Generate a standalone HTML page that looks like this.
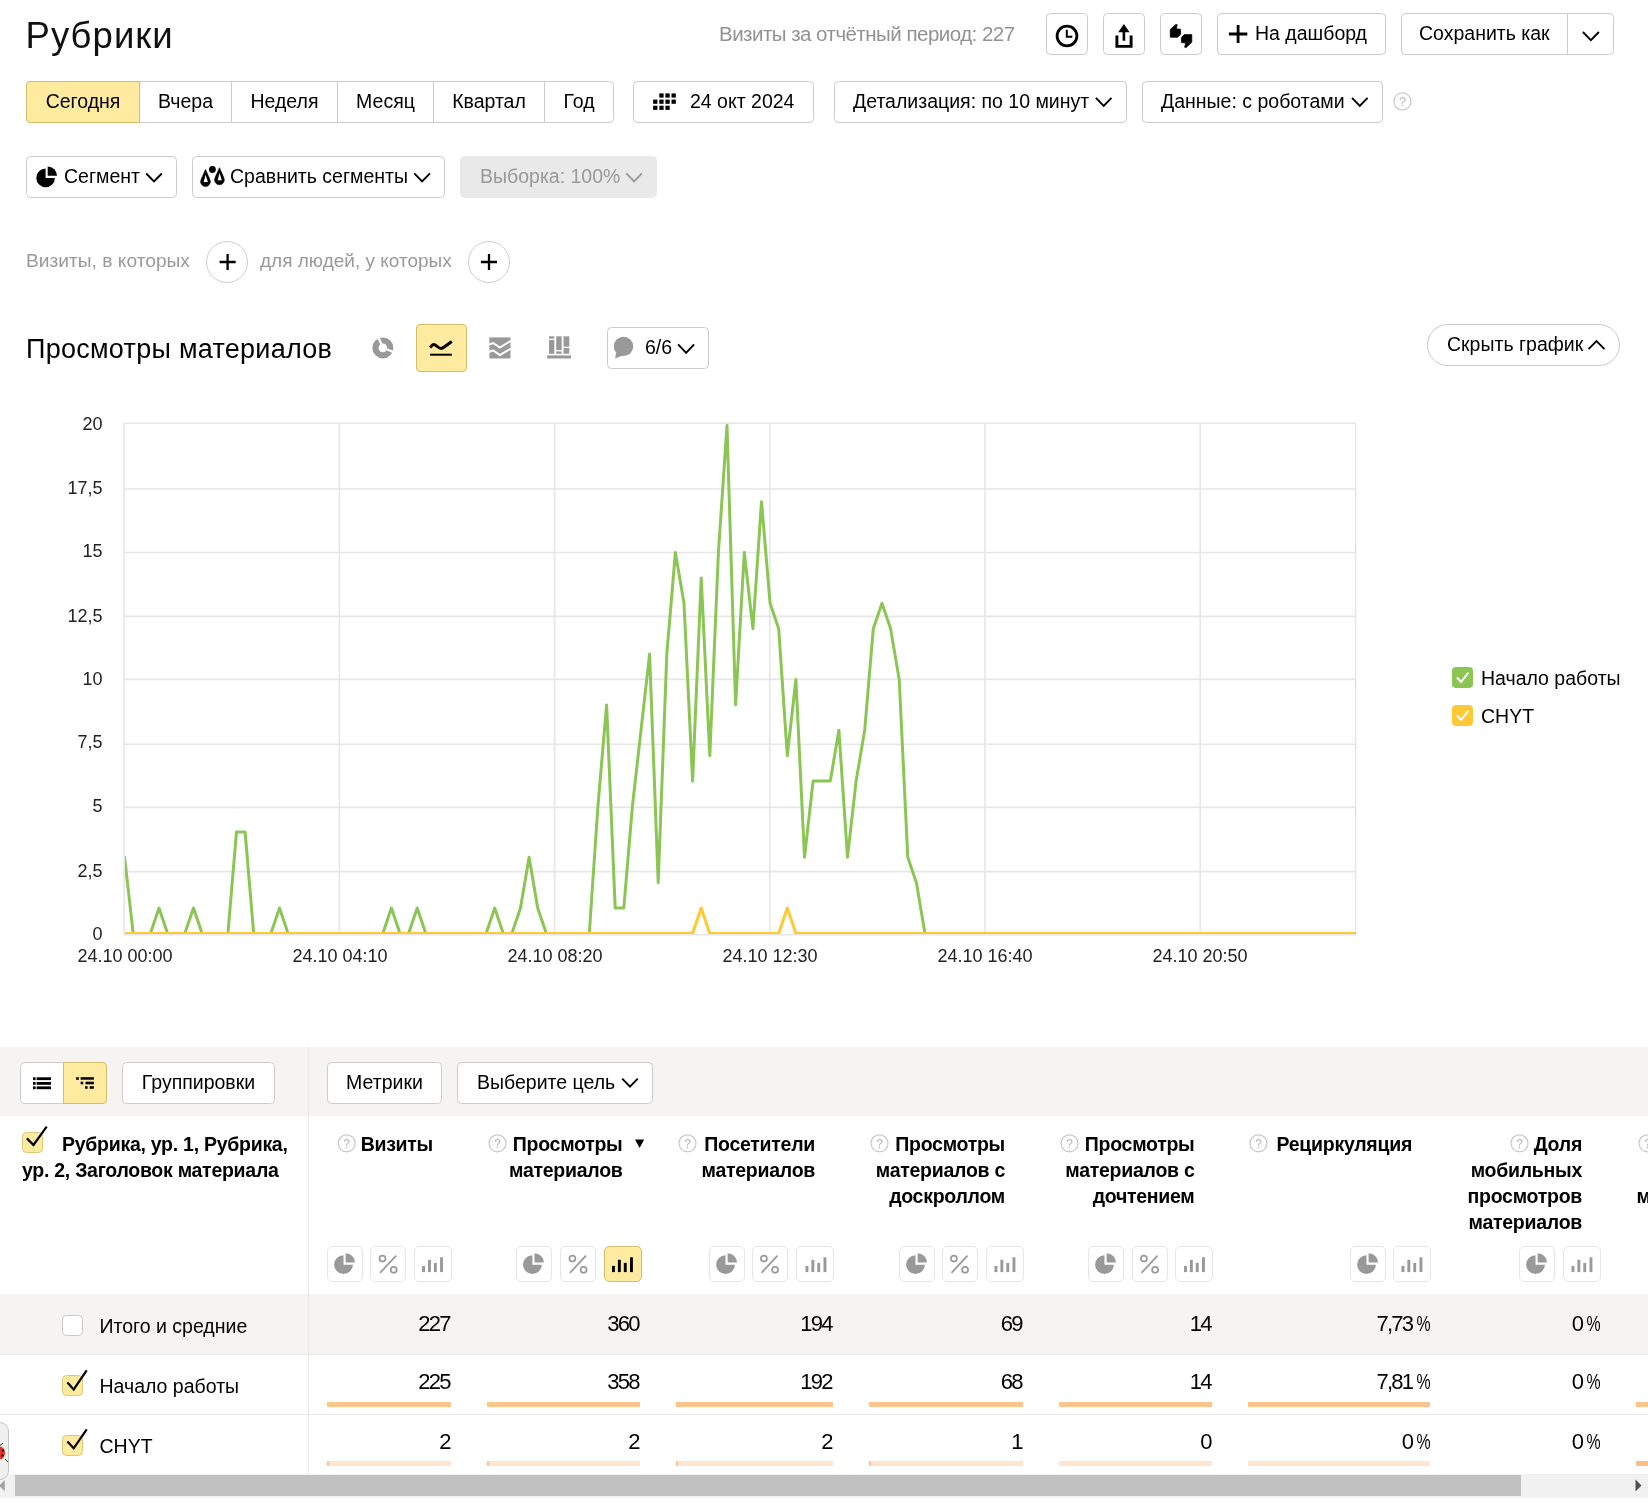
<!DOCTYPE html>
<html lang="ru"><head><meta charset="utf-8"><title>Рубрики</title>
<style>
*{box-sizing:border-box;margin:0;padding:0}
html,body{width:1648px;height:1505px;overflow:hidden;background:#fff}
body{position:relative;font-family:"Liberation Sans",sans-serif;color:#000;font-size:19.5px}
.a{position:absolute;white-space:nowrap}
.btn{position:absolute;height:42px;top:0;border:1px solid #ccc;border-radius:4.5px;background:#fff;line-height:39.5px;white-space:nowrap;text-align:center;font-size:19.5px}
.btn svg{position:absolute}
.gray{color:#999}
.chev{display:inline-block;width:15px;height:9px;vertical-align:middle;margin-left:5px;position:relative;top:-1px}

.hb{font-weight:bold;font-size:19.5px;line-height:26px;letter-spacing:-0.27px;margin-top:0.5px}
.sb{top:1246px;height:36px;border:1px solid #e6e6e6;border-radius:5px;background:#fff}
.num{font-size:22px;line-height:26px;letter-spacing:-1.75px}
.pc{display:inline-block;transform:scaleX(.72);transform-origin:100% 50%;letter-spacing:0;margin-left:-1.6px;margin-right:-1.5px}
#wrap{position:absolute;left:0;top:0;width:1648px;height:1505px;will-change:transform;overflow:hidden}
</style></head><body><div id="wrap">

<!-- ===== header ===== -->
<div class="a" id="title" style="left:25.5px;top:13.4px;font-size:36.5px;line-height:46px;letter-spacing:1.05px;color:#111">Рубрики</div>
<div class="a" id="visits" style="left:719px;top:20.5px;font-size:20.5px;line-height:26px;letter-spacing:-0.52px;color:#929292">Визиты за отчётный период: 227</div>

<div id="toprow" style="position:absolute;left:0;top:13px;width:1648px;height:42px">
 <div class="btn" style="left:1046px;width:42px"></div>
 <div class="btn" style="left:1103px;width:42px"></div>
 <div class="btn" style="left:1160px;width:42px"></div>
 <div class="btn" style="left:1217px;width:169px;text-align:left;padding-left:37px">На дашборд</div>
 <div class="btn" style="left:1401px;width:213px;text-align:left;padding-left:17px">Сохранить как</div>
 <div class="a" style="left:1567px;top:0;width:1px;height:42px;background:#ccc"></div>
</div>

<!-- ===== period row ===== -->
<div id="row1" style="position:absolute;left:0;top:81px;width:1648px;height:42px">
 <div class="btn" style="left:26px;width:588px;"></div>
 <div class="btn" style="left:26px;width:114px;background:#ffeba0;border-color:#d2bd6c;border-radius:4px 0 0 4px">Сегодня</div>
 <div class="a" style="left:139px;width:93px;top:0;line-height:41.5px;text-align:center">Вчера</div>
 <div class="a" style="left:231px;top:0;width:1px;height:42px;background:#ccc"></div>
 <div class="a" style="left:232px;width:105px;top:0;line-height:41.5px;text-align:center">Неделя</div>
 <div class="a" style="left:337px;top:0;width:1px;height:42px;background:#ccc"></div>
 <div class="a" style="left:338px;width:95px;top:0;line-height:41.5px;text-align:center">Месяц</div>
 <div class="a" style="left:433px;top:0;width:1px;height:42px;background:#ccc"></div>
 <div class="a" style="left:434px;width:110px;top:0;line-height:41.5px;text-align:center">Квартал</div>
 <div class="a" style="left:544px;top:0;width:1px;height:42px;background:#ccc"></div>
 <div class="a" style="left:545px;width:68px;top:0;line-height:41.5px;text-align:center">Год</div>

 <div class="btn" style="left:633px;width:181px;text-align:left;padding-left:56px">24 окт 2024</div>
 <div class="btn" style="left:834px;width:293px;text-align:left;padding-left:18px">Детализация: по 10 минут</div>
 <div class="btn" style="left:1142px;width:241px;text-align:left;padding-left:18px">Данные: с роботами</div>
</div>

<!-- ===== segment row ===== -->
<div id="row2" style="position:absolute;left:0;top:156px;width:1648px;height:42px">
 <div class="btn" style="left:26px;width:151px;text-align:left;padding-left:37px">Сегмент</div>
 <div class="btn" style="left:192px;width:253px;text-align:left;padding-left:37px">Сравнить сегменты</div>
 <div class="btn" style="left:460px;width:197px;text-align:left;padding-left:19px;background:#e9e9e9;border-color:#e9e9e9;color:#999">Выборка: 100%</div>
</div>

<!-- ===== filter row ===== -->
<div class="a gray" style="left:26px;top:248px;font-size:19.2px;line-height:26px">Визиты, в которых</div>
<div class="a" style="left:206px;top:241px;width:42px;height:42px;border:1px solid #ccc;border-radius:50%"></div>
<div class="a gray" style="left:260px;top:248px;font-size:19px;line-height:26px">для людей, у которых</div>
<div class="a" style="left:468px;top:241px;width:42px;height:42px;border:1px solid #ccc;border-radius:50%"></div>

<!-- ===== chart header ===== -->
<div class="a" id="ctitle" style="left:26px;top:331.5px;font-size:27px;line-height:34px;letter-spacing:0.27px">Просмотры материалов</div>
<div class="a" style="left:416px;top:324px;width:51px;height:48px;background:#ffeba0;border:1px solid #d2bd6c;border-radius:4px"></div>
<div class="btn" style="left:607px;top:327px;width:102px;text-align:left;padding-left:37px">6/6</div>
<div class="btn" style="left:1427px;top:324px;width:193px;border-radius:21px;text-align:left;padding-left:19px;border-color:#c8c8c8">Скрыть график</div>

<!-- ===== chart ===== -->
<svg class="a" style="left:0;top:400px" width="1648" height="600" viewBox="0 400 1648 600">
 <g stroke="#e6e6e6" stroke-width="1.6" fill="none">
  <path d="M123.4 423.2H1356M124 489H1356M124 552.5H1356M124 616.4H1356M124 679.4H1356M124 744.3H1356M124 807.4H1356M124 871.6H1356M123.4 934.8H1356"/>
  <path d="M124.1 423V935M339.4 423V935M554.6 423V935M769.8 423V935M985 423V935M1200.2 423V935M1355.6 423V935"/>
 </g>
 <clipPath id="cp"><rect x="125" y="420" width="1231.2" height="514.1"/></clipPath>
 <g clip-path="url(#cp)">
 <polyline points="124.6,857.3 133.2,933.5 141.8,933.5 150.4,933.5 159.0,908.1 167.6,933.5 176.2,933.5 184.8,933.5 193.5,908.1 202.1,933.5 210.7,933.5 219.3,933.5 227.9,933.5 236.5,831.9 245.1,831.9 253.7,933.5 262.3,933.5 270.9,933.5 279.5,908.1 288.1,933.5 296.7,933.5 305.3,933.5 313.9,933.5 322.5,933.5 331.2,933.5 339.8,933.5 348.4,933.5 357.0,933.5 365.6,933.5 374.2,933.5 382.8,933.5 391.4,908.1 400.0,933.5 408.6,933.5 417.2,908.1 425.8,933.5 434.4,933.5 443.0,933.5 451.6,933.5 460.2,933.5 468.9,933.5 477.5,933.5 486.1,933.5 494.7,908.1 503.3,933.5 511.9,933.5 520.5,908.1 529.1,857.3 537.7,908.1 546.3,933.5 554.9,933.5 563.5,933.5 572.1,933.5 580.7,933.5 589.3,933.5 597.9,806.5 606.6,704.9 615.2,908.1 623.8,908.1 632.4,806.5 641.0,730.3 649.6,654.1 658.2,882.7 666.8,654.1 675.4,552.5 684.0,603.3 692.6,781.1 701.2,577.9 709.8,755.7 718.4,552.5 727.0,425.5 735.6,704.9 744.3,552.5 752.9,628.7 761.5,501.7 770.1,603.3 778.7,628.7 787.3,755.7 795.9,679.5 804.5,857.3 813.1,781.1 821.7,781.1 830.3,781.1 838.9,730.3 847.5,857.3 856.1,781.1 864.7,730.3 873.3,628.7 882.0,603.3 890.6,628.7 899.2,679.5 907.8,857.3 916.4,882.7 925.0,933.5 933.6,933.5 942.2,933.5 950.8,933.5 959.4,933.5 968.0,933.5 976.6,933.5 985.2,933.5 993.8,933.5 1002.4,933.5 1011.0,933.5 1019.7,933.5 1028.3,933.5 1036.9,933.5 1045.5,933.5 1054.1,933.5 1062.7,933.5 1071.3,933.5 1079.9,933.5 1088.5,933.5 1097.1,933.5 1105.7,933.5 1114.3,933.5 1122.9,933.5 1131.5,933.5 1140.1,933.5 1148.7,933.5 1157.4,933.5 1166.0,933.5 1174.6,933.5 1183.2,933.5 1191.8,933.5 1200.4,933.5 1209.0,933.5 1217.6,933.5 1226.2,933.5 1234.8,933.5 1243.4,933.5 1252.0,933.5 1260.6,933.5 1269.2,933.5 1277.8,933.5 1286.4,933.5 1295.1,933.5 1303.7,933.5 1312.3,933.5 1320.9,933.5 1329.5,933.5 1338.1,933.5 1346.7,933.5 1355.3,933.5" fill="none" stroke="#8bc554" stroke-width="3" stroke-linejoin="round" stroke-linecap="round"/>
 <polyline points="124.6,933.5 133.2,933.5 141.8,933.5 150.4,933.5 159.0,933.5 167.6,933.5 176.2,933.5 184.8,933.5 193.5,933.5 202.1,933.5 210.7,933.5 219.3,933.5 227.9,933.5 236.5,933.5 245.1,933.5 253.7,933.5 262.3,933.5 270.9,933.5 279.5,933.5 288.1,933.5 296.7,933.5 305.3,933.5 313.9,933.5 322.5,933.5 331.2,933.5 339.8,933.5 348.4,933.5 357.0,933.5 365.6,933.5 374.2,933.5 382.8,933.5 391.4,933.5 400.0,933.5 408.6,933.5 417.2,933.5 425.8,933.5 434.4,933.5 443.0,933.5 451.6,933.5 460.2,933.5 468.9,933.5 477.5,933.5 486.1,933.5 494.7,933.5 503.3,933.5 511.9,933.5 520.5,933.5 529.1,933.5 537.7,933.5 546.3,933.5 554.9,933.5 563.5,933.5 572.1,933.5 580.7,933.5 589.3,933.5 597.9,933.5 606.6,933.5 615.2,933.5 623.8,933.5 632.4,933.5 641.0,933.5 649.6,933.5 658.2,933.5 666.8,933.5 675.4,933.5 684.0,933.5 692.6,933.5 701.2,908.1 709.8,933.5 718.4,933.5 727.0,933.5 735.6,933.5 744.3,933.5 752.9,933.5 761.5,933.5 770.1,933.5 778.7,933.5 787.3,908.1 795.9,933.5 804.5,933.5 813.1,933.5 821.7,933.5 830.3,933.5 838.9,933.5 847.5,933.5 856.1,933.5 864.7,933.5 873.3,933.5 882.0,933.5 890.6,933.5 899.2,933.5 907.8,933.5 916.4,933.5 925.0,933.5 933.6,933.5 942.2,933.5 950.8,933.5 959.4,933.5 968.0,933.5 976.6,933.5 985.2,933.5 993.8,933.5 1002.4,933.5 1011.0,933.5 1019.7,933.5 1028.3,933.5 1036.9,933.5 1045.5,933.5 1054.1,933.5 1062.7,933.5 1071.3,933.5 1079.9,933.5 1088.5,933.5 1097.1,933.5 1105.7,933.5 1114.3,933.5 1122.9,933.5 1131.5,933.5 1140.1,933.5 1148.7,933.5 1157.4,933.5 1166.0,933.5 1174.6,933.5 1183.2,933.5 1191.8,933.5 1200.4,933.5 1209.0,933.5 1217.6,933.5 1226.2,933.5 1234.8,933.5 1243.4,933.5 1252.0,933.5 1260.6,933.5 1269.2,933.5 1277.8,933.5 1286.4,933.5 1295.1,933.5 1303.7,933.5 1312.3,933.5 1320.9,933.5 1329.5,933.5 1338.1,933.5 1346.7,933.5 1355.3,933.5" fill="none" stroke="#ffc935" stroke-width="3" stroke-linejoin="round" stroke-linecap="round"/>
 </g>
 <g font-family="Liberation Sans" font-size="18" fill="#222" text-anchor="end">
  <text x="102.5" y="429.8">20</text><text x="102.5" y="494">17,5</text><text x="102.5" y="557">15</text><text x="102.5" y="622">12,5</text>
  <text x="102.5" y="684.8">10</text><text x="102.5" y="748.3">7,5</text><text x="102.5" y="811.5">5</text><text x="102.5" y="877">2,5</text><text x="102.5" y="940">0</text>
 </g>
 <g font-family="Liberation Sans" font-size="18" fill="#222" text-anchor="middle">
  <text x="125" y="962">24.10 00:00</text><text x="340" y="962">24.10 04:10</text><text x="555" y="962">24.10 08:20</text>
  <text x="770" y="962">24.10 12:30</text><text x="985" y="962">24.10 16:40</text><text x="1200" y="962">24.10 20:50</text>
 </g>
</svg>

<!-- legend -->
<div class="a" style="left:1452px;top:667px;width:21px;height:21px;border-radius:4px;background:#8bc554"></div>
<div class="a" style="left:1481px;top:666px;line-height:24px">Начало работы</div>
<div class="a" style="left:1452px;top:705px;width:21px;height:21px;border-radius:4px;background:#ffc935"></div>
<div class="a" style="left:1481px;top:704px;line-height:24px">CHYT</div>

<!-- ===== table ===== -->
<div class="a" style="left:0;top:1047px;width:1648px;height:69px;background:#f5f4f2"></div>
<div class="a" style="left:0;top:1294px;width:1648px;height:61px;background:#f5f4f2"></div>
<div class="a" style="left:0;top:1354px;width:1648px;height:1px;background:#e8e8e8"></div>
<div class="a" style="left:0;top:1414px;width:1648px;height:1px;background:#e8e8e8"></div>
<div class="a" style="left:308px;top:1047px;width:1px;height:427px;background:#e8e8e8"></div>

<div id="tbar" style="position:absolute;left:0;top:1062px;width:1648px;height:42px">
 <div class="btn" style="left:20px;width:87px"></div>
 <div class="btn" style="left:63px;width:44px;background:#ffeba0;border-color:#d2bd6c;border-radius:0 4px 4px 0"></div>
 <div class="btn" style="left:122px;width:153px">Группировки</div>
 <div class="btn" style="left:327px;width:115px">Метрики</div>
 <div class="btn" style="left:457px;width:196px;text-align:left;padding-left:19px">Выберите цель</div>
</div>

<div class="a" style="left:22px;top:1132px;width:21px;height:21px;background:#ffeba0;border:1px solid #dcc878;border-radius:4.5px"></div>
<div class="a hb" style="left:62px;top:1130px">Рубрика, ур. 1, Рубрика,</div>
<div class="a hb" style="left:22px;top:1156px">ур. 2, Заголовок материала</div>
<div class="a hb" style="right:1215px;top:1130px">Визиты</div>
<div class="a hb" style="right:1025.5px;top:1130px">Просмотры</div>
<div class="a hb" style="right:1025.5px;top:1156px">материалов</div>
<div class="a hb" style="right:833px;top:1130px">Посетители</div>
<div class="a hb" style="right:833px;top:1156px">материалов</div>
<div class="a hb" style="right:643px;top:1130px">Просмотры</div>
<div class="a hb" style="right:643px;top:1156px">материалов с</div>
<div class="a hb" style="right:643px;top:1182px">доскроллом</div>
<div class="a hb" style="right:453.5px;top:1130px">Просмотры</div>
<div class="a hb" style="right:453.5px;top:1156px">материалов с</div>
<div class="a hb" style="right:453.5px;top:1182px">дочтением</div>
<div class="a hb" style="right:236px;top:1130px">Рециркуляция</div>
<div class="a hb" style="right:66px;top:1130px">Доля</div>
<div class="a hb" style="right:66px;top:1156px">мобильных</div>
<div class="a hb" style="right:66px;top:1182px">просмотров</div>
<div class="a hb" style="right:66px;top:1208px">материалов</div>
<div class="a hb" style="left:1636.5px;top:1182px">м</div>
<div class="a sb" style="left:327px;width:36px"></div>
<div class="a sb" style="left:370px;width:36px"></div>
<div class="a sb" style="left:414px;width:38px"></div>
<div class="a sb" style="left:516px;width:36px"></div>
<div class="a sb" style="left:560px;width:36px"></div>
<div class="a sb" style="left:709px;width:36px"></div>
<div class="a sb" style="left:752px;width:36px"></div>
<div class="a sb" style="left:796px;width:38px"></div>
<div class="a sb" style="left:899px;width:36px"></div>
<div class="a sb" style="left:942px;width:36px"></div>
<div class="a sb" style="left:986px;width:38px"></div>
<div class="a sb" style="left:1088px;width:36px"></div>
<div class="a sb" style="left:1132px;width:36px"></div>
<div class="a sb" style="left:1175px;width:38px"></div>
<div class="a sb" style="left:1350px;width:36px"></div>
<div class="a sb" style="left:1393px;width:38px"></div>
<div class="a sb" style="left:1519px;width:36px"></div>
<div class="a sb" style="left:1563px;width:38px"></div>
<div class="a sb" style="left:604px;width:38px;background:#ffeba0;border-color:#d2bd6c"></div>
<div class="a" style="left:62px;top:1315px;width:21px;height:21px;background:#fff;border:1px solid #c8c8c8;border-radius:4.5px"></div>
<div class="a" style="left:62px;top:1375px;width:21px;height:21px;background:#ffeba0;border:1px solid #dcc878;border-radius:4.5px"></div>
<div class="a" style="left:62px;top:1435px;width:21px;height:21px;background:#ffeba0;border:1px solid #dcc878;border-radius:4.5px"></div>
<div class="a" style="left:99.5px;top:1313px;line-height:26px">Итого и средние</div>
<div class="a" style="left:99.5px;top:1373px;line-height:26px">Начало работы</div>
<div class="a" style="left:99.5px;top:1433px;line-height:26px">CHYT</div>
<div class="a num" style="right:1198.3px;top:1311.4px">227</div>
<div class="a num" style="right:1009.3px;top:1311.4px">360</div>
<div class="a num" style="right:816.3px;top:1311.4px">194</div>
<div class="a num" style="right:626.3px;top:1311.4px">69</div>
<div class="a num" style="right:437.3px;top:1311.4px">14</div>
<div class="a num" style="right:219.3px;top:1311.4px">7,73<span class="pc">%</span></div>
<div class="a num" style="right:49.3px;top:1311.4px">0<span class="pc">%</span></div>
<div class="a num" style="right:1198.3px;top:1369.4px">225</div>
<div class="a num" style="right:1009.3px;top:1369.4px">358</div>
<div class="a num" style="right:816.3px;top:1369.4px">192</div>
<div class="a num" style="right:626.3px;top:1369.4px">68</div>
<div class="a num" style="right:437.3px;top:1369.4px">14</div>
<div class="a num" style="right:219.3px;top:1369.4px">7,81<span class="pc">%</span></div>
<div class="a num" style="right:49.3px;top:1369.4px">0<span class="pc">%</span></div>
<div class="a num" style="right:1198.3px;top:1429.4px">2</div>
<div class="a num" style="right:1009.3px;top:1429.4px">2</div>
<div class="a num" style="right:816.3px;top:1429.4px">2</div>
<div class="a num" style="right:626.3px;top:1429.4px">1</div>
<div class="a num" style="right:437.3px;top:1429.4px">0</div>
<div class="a num" style="right:219.3px;top:1429.4px">0<span class="pc">%</span></div>
<div class="a num" style="right:49.3px;top:1429.4px">0<span class="pc">%</span></div>
<div class="a" style="left:327px;top:1402px;width:124px;height:4.5px;background:#fdc48b"></div>
<div class="a" style="left:327px;top:1461px;width:124px;height:5px;background:#fee5cd"></div>
<div class="a" style="left:487px;top:1402px;width:153px;height:4.5px;background:#fdc48b"></div>
<div class="a" style="left:487px;top:1461px;width:153px;height:5px;background:#fee5cd"></div>
<div class="a" style="left:676px;top:1402px;width:157px;height:4.5px;background:#fdc48b"></div>
<div class="a" style="left:676px;top:1461px;width:157px;height:5px;background:#fee5cd"></div>
<div class="a" style="left:869px;top:1402px;width:154px;height:4.5px;background:#fdc48b"></div>
<div class="a" style="left:869px;top:1461px;width:154px;height:5px;background:#fee5cd"></div>
<div class="a" style="left:1059px;top:1402px;width:153px;height:4.5px;background:#fdc48b"></div>
<div class="a" style="left:1059px;top:1461px;width:153px;height:5px;background:#fee5cd"></div>
<div class="a" style="left:1248px;top:1402px;width:182px;height:4.5px;background:#fdc48b"></div>
<div class="a" style="left:1248px;top:1461px;width:182px;height:5px;background:#fee5cd"></div>
<div class="a" style="left:1636px;top:1402px;width:12px;height:4.5px;background:#fdc48b"></div>
<div class="a" style="left:1636px;top:1461px;width:12px;height:5px;background:#fbc08a"></div>
<div class="a" style="left:327px;top:1461px;width:1.5px;height:5px;background:#fdc48b"></div>
<div class="a" style="left:487px;top:1461px;width:1.5px;height:5px;background:#fdc48b"></div>
<div class="a" style="left:676px;top:1461px;width:1.5px;height:5px;background:#fdc48b"></div>
<div class="a" style="left:869px;top:1461px;width:1.5px;height:5px;background:#fdc48b"></div>
<div class="a" style="left:-9px;top:1422px;width:18px;height:58px;background:#f0f0f0;border:1px solid #c4c4c4;border-radius:9px;z-index:5"></div>
<svg class="a" style="left:0;top:1442px;z-index:6" width="9" height="22" viewBox="0 0 9 22"><ellipse cx="0" cy="11" rx="5" ry="6.5" fill="#e8302a"/><circle cx="3" cy="8.5" r="1.2" fill="#222"/><circle cx="2.5" cy="13.5" r="1.2" fill="#222"/><path d="M0 3.5L3 1M5 17L8 20" stroke="#333" stroke-width="1"/></svg>
<!-- scrollbar -->
<div class="a" style="left:0;top:1474px;width:1648px;height:24px;background:#f1f1f1"></div>
<div class="a" style="left:15px;top:1475px;width:1506px;height:21px;background:#c1c1c1"></div>

<svg class="a" style="left:0;top:0;pointer-events:none" width="1648" height="1505" viewBox="0 0 1648 1505">
<circle cx="1067" cy="36" r="9.9" fill="none" stroke="#000" stroke-width="2.8"/><path d="M1066.8 29.8V36.8H1072.3" fill="none" stroke="#000" stroke-width="2"/>
<path d="M1123.9 24L1129.6 32.2H1125.2V40.8H1122.6V32.2H1118.2Z" fill="#000"/><path d="M1116.9 35.4V46.4H1131.1V35.4" fill="none" stroke="#000" stroke-width="2.9"/>
<path d="M1170.2 29.6L1175.8 24.4L1177.3 24.7L1176.3 28.8L1180.5 29.2L1180.7 34.3L1177.9 37.3H1170.3Z" fill="#000" stroke="#000" stroke-width="0.7" stroke-linejoin="round"/>
<path d="M1191.8 42.2L1186.2 47.6L1184.6 47.2L1185.7 43.1L1181.4 42.6L1181.4 37.6L1184.1 34.6H1191.8Z" fill="#000" stroke="#000" stroke-width="0.7" stroke-linejoin="round"/>
<path d="M1228.9 34H1247.3M1238.1 25V43" stroke="#000" stroke-width="2.8"/>
<path d="M1582.9 32.0L1590.9 40.2L1598.9 32.0" stroke="#000" stroke-width="1.9" fill="none"/>
<rect x="659.3" y="93.4" width="4.3" height="4.2" fill="#000"/><rect x="665.4" y="93.4" width="4.3" height="4.2" fill="#000"/><rect x="671.5" y="93.4" width="4.3" height="4.2" fill="#000"/><rect x="653.1" y="99.6" width="4.3" height="4.2" fill="#000"/><rect x="659.3" y="99.6" width="4.3" height="4.2" fill="#000"/><rect x="665.4" y="99.6" width="4.3" height="4.2" fill="#000"/><rect x="671.5" y="99.6" width="4.3" height="4.2" fill="#000"/><rect x="653.1" y="105.7" width="4.3" height="4.2" fill="#000"/><rect x="659.3" y="105.7" width="4.3" height="4.2" fill="#000"/><rect x="665.4" y="105.7" width="4.3" height="4.2" fill="#000"/>
<path d="M1095.9 97.9L1103.7 105.9L1111.5 97.9" stroke="#000" stroke-width="1.9" fill="none"/>
<path d="M1352.0 97.9L1359.8 105.9L1367.6 97.9" stroke="#000" stroke-width="1.9" fill="none"/>
<circle cx="1402.4" cy="101.4" r="8.6" fill="none" stroke="#c8c8c8" stroke-width="1.2"/><text x="1402.4" y="105.8" font-family="Liberation Sans" font-size="12.5" fill="#b4b4b4" text-anchor="middle">?</text>
<path d="M45.6 177.9L45.6 168.6A9.3 9.3 0 1 0 54.900000000000006 177.9Z" fill="#000"/><path d="M47.7 175.8L47.7 166.5A9.3 9.3 0 0 1 57.0 175.8Z" fill="#000"/>
<path d="M146.2 173.5L154.0 181.5L161.8 173.5" stroke="#000" stroke-width="1.9" fill="none"/>
<path d="M205.5 169.4L209.94 179.53A4.9 4.9 0 1 1 201.06 179.53Z" fill="#000" stroke="#000" stroke-width="0.6" stroke-linejoin="round"/><path d="M205.6 174.8L207.85 181.9H203.7Z" fill="#fff"/><path d="M219.45 167.70000000000002L223.89 177.83A4.9 4.9 0 1 1 215.01 177.83Z" fill="#000" stroke="#000" stroke-width="0.6" stroke-linejoin="round"/><path d="M219.54999999999998 173.10000000000002L221.79999999999998 180.20000000000002H217.64999999999998Z" fill="#fff"/><circle cx="212.4" cy="169.5" r="3.4" fill="#000"/>
<path d="M414.3 173.3L422.1 181.3L429.9 173.3" stroke="#000" stroke-width="1.9" fill="none"/>
<path d="M626.3 173.3L634.1 181.3L641.9 173.3" stroke="#999" stroke-width="1.9" fill="none"/>
<path d="M219.6 262H235.7M227.6 254V270" stroke="#000" stroke-width="2.3"/>
<path d="M480.9 262H497M489 254V270" stroke="#000" stroke-width="2.3"/>
<circle cx="382.85" cy="347.9" r="7.4" fill="none" stroke="#999" stroke-width="6.2"/><path d="M382 345.6L377.9 336.6M386.3 349.2L394.6 352.4" stroke="#fff" stroke-width="2.3"/>
<path d="M430.3 347.6C431.6 345.6 433 344 434.4 344.6C436.6 345.6 439 348.6 441.1 348.6C443 348.4 448.5 343.6 451.8 341.4" fill="none" stroke="#000" stroke-width="3"/><path d="M430.1 354.7H451.8" stroke="#000" stroke-width="2"/>
<rect x="489.4" y="337.4" width="21.1" height="21.1" fill="#999"/><path d="M489 344.6L493.2 343L499.8 347.6L510.8 340.8M489 352L493.2 350.4L499.8 355L510.8 348.6" fill="none" stroke="#fff" stroke-width="1.9"/>
<g fill="#999"><rect x="547.2" y="355.4" width="23.8" height="3.1"/><rect x="549" y="336.3" width="5.3" height="2.4"/><rect x="549" y="340" width="5.3" height="13.8"/><rect x="556.2" y="336.3" width="5.5" height="13.8"/><rect x="556.2" y="351.4" width="5.5" height="2.4"/><rect x="563.5" y="336.3" width="5.8" height="10.4"/><rect x="563.5" y="348" width="5.8" height="5.8"/></g>
<circle cx="623.5" cy="346.4" r="9.7" fill="#999"/><path d="M616 352.5L615.2 358.6L622.5 355.6Z" fill="#999"/>
<path d="M678.1 344.3L686.1 352.9L694.1 344.3" stroke="#000" stroke-width="1.9" fill="none"/>
<path d="M1588.5 349.1L1596.5 341.1L1604.5 349.1" stroke="#000" stroke-width="1.9" fill="none"/>
<path d="M1457 677.5L1461 682L1468.4 672.6" fill="none" stroke="#fff" stroke-width="2"/>
<path d="M1457 715.5L1461 720L1468.4 710.6" fill="none" stroke="#fff" stroke-width="2"/>
<rect x="33" y="1077.3" width="2.6" height="2.8" fill="#000"/><rect x="36.6" y="1077.3" width="14.4" height="2.8" fill="#000"/><rect x="33" y="1082.0" width="2.6" height="2.8" fill="#000"/><rect x="36.6" y="1082.0" width="14.4" height="2.8" fill="#000"/><rect x="33" y="1086.4" width="2.6" height="2.8" fill="#000"/><rect x="36.6" y="1086.4" width="14.4" height="2.8" fill="#000"/>
<g fill="#000"><rect x="76.1" y="1077.2" width="2.7" height="2.6"/><rect x="80.6" y="1077.2" width="13.3" height="2.5"/><rect x="80.6" y="1081.7" width="2.6" height="2.6"/><rect x="85.5" y="1081.7" width="8.4" height="2.6"/><rect x="85.1" y="1086.2" width="2.5" height="2.6"/><rect x="89.7" y="1086.2" width="4.2" height="2.6"/></g>
<path d="M622.2 1078.7L630.0 1086.7L637.8 1078.7" stroke="#000" stroke-width="1.9" fill="none"/>
<circle cx="346.7" cy="1143.3" r="8.5" fill="none" stroke="#c8c8c8" stroke-width="1.2"/><text x="346.7" y="1147.5" font-family="Liberation Sans" font-size="12" fill="#b4b4b4" text-anchor="middle">?</text>
<circle cx="497.5" cy="1143.3" r="8.5" fill="none" stroke="#c8c8c8" stroke-width="1.2"/><text x="497.5" y="1147.5" font-family="Liberation Sans" font-size="12" fill="#b4b4b4" text-anchor="middle">?</text>
<circle cx="687.5" cy="1143.3" r="8.5" fill="none" stroke="#c8c8c8" stroke-width="1.2"/><text x="687.5" y="1147.5" font-family="Liberation Sans" font-size="12" fill="#b4b4b4" text-anchor="middle">?</text>
<circle cx="879.5" cy="1143.3" r="8.5" fill="none" stroke="#c8c8c8" stroke-width="1.2"/><text x="879.5" y="1147.5" font-family="Liberation Sans" font-size="12" fill="#b4b4b4" text-anchor="middle">?</text>
<circle cx="1069.5" cy="1143.3" r="8.5" fill="none" stroke="#c8c8c8" stroke-width="1.2"/><text x="1069.5" y="1147.5" font-family="Liberation Sans" font-size="12" fill="#b4b4b4" text-anchor="middle">?</text>
<circle cx="1258.5" cy="1143.3" r="8.5" fill="none" stroke="#c8c8c8" stroke-width="1.2"/><text x="1258.5" y="1147.5" font-family="Liberation Sans" font-size="12" fill="#b4b4b4" text-anchor="middle">?</text>
<circle cx="1519.5" cy="1143.3" r="8.5" fill="none" stroke="#c8c8c8" stroke-width="1.2"/><text x="1519.5" y="1147.5" font-family="Liberation Sans" font-size="12" fill="#b4b4b4" text-anchor="middle">?</text>
<circle cx="1647.5" cy="1143.3" r="8.5" fill="none" stroke="#c8c8c8" stroke-width="1.2"/><text x="1647.5" y="1147.5" font-family="Liberation Sans" font-size="12" fill="#b4b4b4" text-anchor="middle">?</text>
<path d="M635 1139.4H644.2L639.6 1148Z" fill="#000"/>
<path d="M343.5 1264.7L343.5 1255.3A9.4 9.4 0 1 0 352.9 1264.7Z" fill="#999"/><path d="M345.6 1262.6000000000001L345.6 1253.2A9.4 9.4 0 0 1 355.0 1262.6000000000001Z" fill="#999"/>
<path d="M532.4 1264.7L532.4 1255.3A9.4 9.4 0 1 0 541.8 1264.7Z" fill="#999"/><path d="M534.5 1262.6000000000001L534.5 1253.2A9.4 9.4 0 0 1 543.9 1262.6000000000001Z" fill="#999"/>
<path d="M725.5 1264.7L725.5 1255.3A9.4 9.4 0 1 0 734.9 1264.7Z" fill="#999"/><path d="M727.6 1262.6000000000001L727.6 1253.2A9.4 9.4 0 0 1 737.0 1262.6000000000001Z" fill="#999"/>
<path d="M915.5 1264.7L915.5 1255.3A9.4 9.4 0 1 0 924.9 1264.7Z" fill="#999"/><path d="M917.6 1262.6000000000001L917.6 1253.2A9.4 9.4 0 0 1 927.0 1262.6000000000001Z" fill="#999"/>
<path d="M1104.5 1264.7L1104.5 1255.3A9.4 9.4 0 1 0 1113.9 1264.7Z" fill="#999"/><path d="M1106.6 1262.6000000000001L1106.6 1253.2A9.4 9.4 0 0 1 1116.0 1262.6000000000001Z" fill="#999"/>
<path d="M1366.5 1264.7L1366.5 1255.3A9.4 9.4 0 1 0 1375.9 1264.7Z" fill="#999"/><path d="M1368.6 1262.6000000000001L1368.6 1253.2A9.4 9.4 0 0 1 1378.0 1262.6000000000001Z" fill="#999"/>
<path d="M1535.5 1264.7L1535.5 1255.3A9.4 9.4 0 1 0 1544.9 1264.7Z" fill="#999"/><path d="M1537.6 1262.6000000000001L1537.6 1253.2A9.4 9.4 0 0 1 1547.0 1262.6000000000001Z" fill="#999"/>
<circle cx="382.5" cy="1258.6000000000001" r="3" fill="none" stroke="#999" stroke-width="1.7"/><circle cx="393.70000000000005" cy="1269.8" r="3" fill="none" stroke="#999" stroke-width="1.7"/><path d="M380.1 1272.8L396.1 1255.6000000000001" stroke="#999" stroke-width="1.7"/>
<circle cx="572.4" cy="1258.6000000000001" r="3" fill="none" stroke="#999" stroke-width="1.7"/><circle cx="583.6" cy="1269.8" r="3" fill="none" stroke="#999" stroke-width="1.7"/><path d="M570 1272.8L586 1255.6000000000001" stroke="#999" stroke-width="1.7"/>
<circle cx="763.9" cy="1258.6000000000001" r="3" fill="none" stroke="#999" stroke-width="1.7"/><circle cx="775.1" cy="1269.8" r="3" fill="none" stroke="#999" stroke-width="1.7"/><path d="M761.5 1272.8L777.5 1255.6000000000001" stroke="#999" stroke-width="1.7"/>
<circle cx="953.9" cy="1258.6000000000001" r="3" fill="none" stroke="#999" stroke-width="1.7"/><circle cx="965.1" cy="1269.8" r="3" fill="none" stroke="#999" stroke-width="1.7"/><path d="M951.5 1272.8L967.5 1255.6000000000001" stroke="#999" stroke-width="1.7"/>
<circle cx="1143.9" cy="1258.6000000000001" r="3" fill="none" stroke="#999" stroke-width="1.7"/><circle cx="1155.1" cy="1269.8" r="3" fill="none" stroke="#999" stroke-width="1.7"/><path d="M1141.5 1272.8L1157.5 1255.6000000000001" stroke="#999" stroke-width="1.7"/>
<rect x="422.1" y="1265.9" width="2.9" height="6.2" fill="#999"/><rect x="428.0" y="1259.8" width="2.9" height="12.3" fill="#999"/><rect x="433.9" y="1262.9" width="2.9" height="9.2" fill="#999"/><rect x="440.1" y="1257.3" width="2.9" height="14.8" fill="#999"/>
<rect x="805.5" y="1265.9" width="2.9" height="6.2" fill="#999"/><rect x="811.4" y="1259.8" width="2.9" height="12.3" fill="#999"/><rect x="817.3" y="1262.9" width="2.9" height="9.2" fill="#999"/><rect x="823.5" y="1257.3" width="2.9" height="14.8" fill="#999"/>
<rect x="994.5" y="1265.9" width="2.9" height="6.2" fill="#999"/><rect x="1000.4" y="1259.8" width="2.9" height="12.3" fill="#999"/><rect x="1006.3" y="1262.9" width="2.9" height="9.2" fill="#999"/><rect x="1012.5" y="1257.3" width="2.9" height="14.8" fill="#999"/>
<rect x="1184.0" y="1265.9" width="2.9" height="6.2" fill="#999"/><rect x="1189.9" y="1259.8" width="2.9" height="12.3" fill="#999"/><rect x="1195.8" y="1262.9" width="2.9" height="9.2" fill="#999"/><rect x="1202.0" y="1257.3" width="2.9" height="14.8" fill="#999"/>
<rect x="1401.5" y="1265.9" width="2.9" height="6.2" fill="#999"/><rect x="1407.4" y="1259.8" width="2.9" height="12.3" fill="#999"/><rect x="1413.3" y="1262.9" width="2.9" height="9.2" fill="#999"/><rect x="1419.5" y="1257.3" width="2.9" height="14.8" fill="#999"/>
<rect x="1571.5" y="1265.9" width="2.9" height="6.2" fill="#999"/><rect x="1577.4" y="1259.8" width="2.9" height="12.3" fill="#999"/><rect x="1583.3" y="1262.9" width="2.9" height="9.2" fill="#999"/><rect x="1589.5" y="1257.3" width="2.9" height="14.8" fill="#999"/>
<rect x="612.0" y="1265.9" width="2.9" height="6.2" fill="#000"/><rect x="617.9" y="1259.8" width="2.9" height="12.3" fill="#000"/><rect x="623.8" y="1262.9" width="2.9" height="9.2" fill="#000"/><rect x="630.0" y="1257.3" width="2.9" height="14.8" fill="#000"/>
<path d="M26.9 1138.4L33.5 1145L46.7 1126.7" fill="none" stroke="#000" stroke-width="2.2"/>
<path d="M67.4 1382.6L73.7 1389.4L86.7 1370.4" fill="none" stroke="#000" stroke-width="2.2"/>
<path d="M67.4 1441.5L73.7 1448.3L86.7 1429.4" fill="none" stroke="#000" stroke-width="2.2"/>
<path d="M4.8 1480V1491.2L-1 1485.6Z" fill="#a3a3a3"/><path d="M1635.5 1479.5V1491.5L1641.5 1485.5Z" fill="#505050"/>
</svg>
</div></body></html>
